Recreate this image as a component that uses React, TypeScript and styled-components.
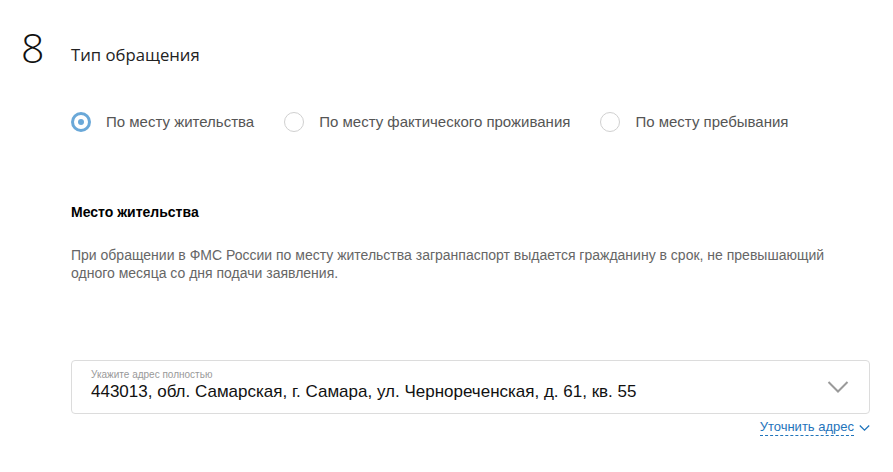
import React from "react";
import styled, { createGlobalStyle } from "styled-components";

const Global = createGlobalStyle`
  html, body { margin: 0; padding: 0; background: #fff; }
  body { font-family: "Liberation Sans", Arial, sans-serif; }
`;

const Page = styled.div`
  width: 893px;
  height: 472px;
  box-sizing: border-box;
  padding: 24px 23px 0 21px;
  display: grid;
  grid-template-columns: 50px 1fr;
`;

const StepNumber = styled.div`
  font-family: "Open Sans", sans-serif;
  font-weight: 300;
  font-size: 41px;
  line-height: 48px;
  color: #111;
  margin-top: -1px;
`;

const Content = styled.div`
  display: flex;
  flex-direction: column;
`;

const Title = styled.h2`
  margin: 20px 0 0 0;
  font-family: "Open Sans", sans-serif;
  font-weight: 400;
  font-size: 16.7px;
  line-height: 22px;
  color: #222;
`;

const RadioGroup = styled.div`
  display: flex;
  gap: 30px;
  margin-top: 46px;
`;

const RadioLabel = styled.label`
  display: flex;
  align-items: center;
  gap: 15px;
  font-size: 15px;
  color: #555;
  line-height: 20px;
`;

const RadioCircle = styled.span<{ $checked?: boolean }>`
  box-sizing: border-box;
  width: 20px;
  height: 20px;
  border-radius: 50%;
  border: ${(p) => (p.$checked ? "3px solid #6aa8d8" : "1px solid #d0d0d0")};
  display: flex;
  align-items: center;
  justify-content: center;
  &::after {
    content: "";
    display: ${(p) => (p.$checked ? "block" : "none")};
    width: 6px;
    height: 6px;
    border-radius: 50%;
    background: #6aa8d8;
  }
`;

const SectionTitle = styled.h3`
  margin: 72px 0 0 0;
  font-size: 14px;
  font-weight: 700;
  line-height: 16px;
  color: #000;
`;

const Paragraph = styled.p`
  margin: 26px 0 0 0;
  font-size: 14px;
  line-height: 18px;
  color: #666;
  max-width: 780px;
`;

const Field = styled.div`
  margin-top: 78px;
  height: 54px;
  box-sizing: border-box;
  border: 1px solid #dcdcdc;
  border-radius: 4px;
  display: flex;
  align-items: center;
  padding: 0 20px 0 19px;
`;

const FieldBody = styled.div`
  flex: 1;
  display: flex;
  flex-direction: column;
  margin-top: -4px;
`;

const FieldLabel = styled.span`
  font-size: 10px;
  line-height: 11px;
  color: #999;
`;

const FieldValue = styled.span`
  font-size: 17px;
  line-height: 20px;
  color: #111;
  margin-top: 2px;
`;

const LinkRow = styled.div`
  display: flex;
  justify-content: flex-end;
  align-items: center;
  gap: 5px;
  margin-top: 5px;
`;

const DashedLink = styled.a`
  font-size: 13px;
  line-height: 16px;
  color: #1f74bb;
  text-decoration: none;
  border-bottom: 1px dashed #1f74bb;
  cursor: pointer;
`;

const options = [
  { label: "По месту жительства", checked: true },
  { label: "По месту фактического проживания", checked: false },
  { label: "По месту пребывания", checked: false },
];

export default function App() {
  return (
    <>
      <Global />
      <Page>
        <StepNumber>8</StepNumber>
        <Content>
          <Title>Тип обращения</Title>
          <RadioGroup>
            {options.map((o) => (
              <RadioLabel key={o.label}>
                <RadioCircle $checked={o.checked} />
                {o.label}
              </RadioLabel>
            ))}
          </RadioGroup>
          <SectionTitle>Место жительства</SectionTitle>
          <Paragraph>
            При обращении в ФМС России по месту жительства загранпаспорт выдается гражданину в срок, не
            превышающий одного месяца со дня подачи заявления.
          </Paragraph>
          <Field>
            <FieldBody>
              <FieldLabel>Укажите адрес полностью</FieldLabel>
              <FieldValue>443013, обл. Самарская, г. Самара, ул. Чернореченская, д. 61, кв. 55</FieldValue>
            </FieldBody>
            <svg width="22" height="14" viewBox="0 0 22 14">
              <path d="M1.5 2 L11 11.5 L20.5 2" fill="none" stroke="#9a9a9a" strokeWidth="2" />
            </svg>
          </Field>
          <LinkRow>
            <DashedLink>Уточнить адрес</DashedLink>
            <svg width="11" height="8" viewBox="0 0 11 8">
              <path d="M0.8 1.5 L5.5 6.2 L10.2 1.5" fill="none" stroke="#1f74bb" strokeWidth="1.3" />
            </svg>
          </LinkRow>
        </Content>
      </Page>
    </>
  );
}
